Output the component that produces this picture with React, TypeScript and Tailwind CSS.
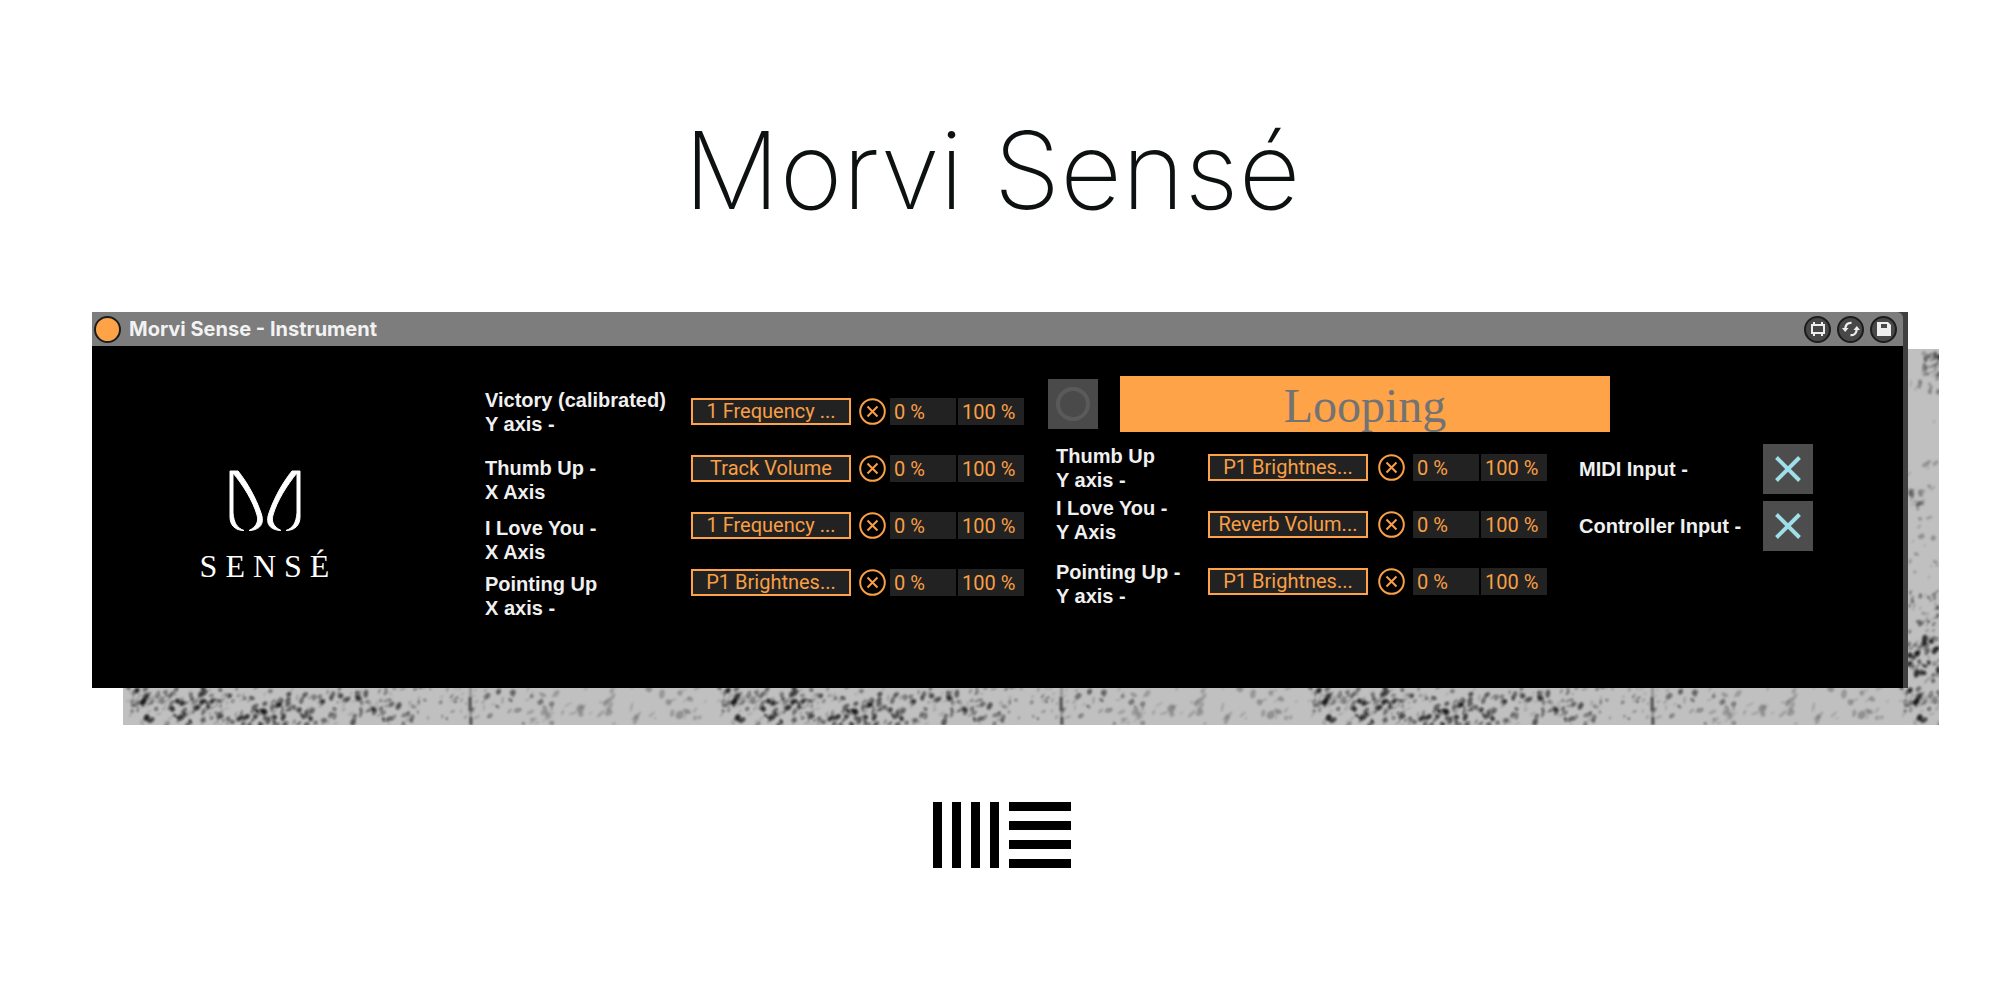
import { useId } from "react";

const TILE = 591;
const STRIP_H = 376;

type Speck = { x: number; y: number; rx: number; ry: number; o: number; a: number };

function makeSpecks(): Speck[] {
  let seed = 20;
  const rnd = () => {
    seed = (seed * 1664525 + 1013904223) % 4294967296;
    return seed / 4294967296;
  };
  const out: Speck[] = [];
  const add = (n: number, x0: number, x1: number, y0: number, y1: number, size: number, dark: number) => {
    for (let i = 0; i < n; i++) {
      const k = rnd();
      out.push({
        x: x0 + rnd() * (x1 - x0),
        y: y0 + rnd() * (y1 - y0),
        rx: 0.8 + k * k * size,
        ry: 1.2 + rnd() * size * 1.4,
        o: 0.15 + k * k * dark,
        a: rnd() * 70 + 5,
      });
    }
  };
  // lower edge of the concrete
  add(170, 4, 182, 338, 376, 2, 0.7);
  add(60, 60, 175, 350, 376, 2, 0.8);
  add(28, 4, 46, 338, 360, 2, 0.6);
  add(100, 180, 292, 338, 376, 2, 0.6);
  add(30, 292, 345, 338, 376, 1, 0.5);
  add(36, 349, 430, 338, 376, 2, 0.4);
  add(60, 400, 585, 338, 376, 3, 0.1);
  // right edge
  add(20, 27, 43, 0, 28, 2, 0.8);
  add(22, 12, 43, 0, 44, 2, 0.2);
  add(18, 14, 28, 140, 160, 2, 0.35);
  add(24, 12, 43, 60, 240, 2, 0.12);
  add(50, 12, 43, 240, 300, 1, 0.4);
  add(60, 12, 43, 288, 332, 2, 0.7);
  return out;
}

const SPECKS = makeSpecks();

function Concrete() {
  const id = useId();
  return (
    <svg aria-hidden="true" className="block h-full w-full">
      <defs>
        <filter id={`${id}-soft`} x="0" y="0" width="100%" height="100%">
          <feGaussianBlur stdDeviation="0.8" />
        </filter>
        <pattern id={id} width={TILE} height={STRIP_H} patternUnits="userSpaceOnUse">
          <rect width={TILE} height={STRIP_H} fill="#c0c0c0" />
          <g filter={`url(#${id}-soft)`}>
            {SPECKS.map((s, i) => (
              <ellipse
                key={i}
                cx={s.x}
                cy={s.y}
                rx={s.rx}
                ry={s.ry}
                fill="#111"
                opacity={s.o}
                transform={`rotate(${s.a} ${s.x} ${s.y})`}
              />
            ))}
            <rect x="346" width="3" height={STRIP_H} fill="#666" opacity="0.45" />
            <path d="M347 348v14M348 368v8" stroke="#222" strokeWidth="3" opacity="0.6" />
          </g>
        </pattern>
      </defs>
      <rect width="100%" height="100%" fill={`url(#${id})`} />
    </svg>
  );
}

function HeaderButton({ label, children }: { label: string; children: React.ReactNode }) {
  return (
    <button
      type="button"
      aria-label={label}
      className="flex size-[27px] items-center justify-center rounded-full border-2 border-[#1c1c1c] bg-[#484848]"
    >
      {children}
    </button>
  );
}

function SenseLogo() {
  return (
    <div className="flex w-full flex-col items-center text-white">
      <svg aria-hidden="true" width="72" height="62" viewBox="0 0 72 62" fill="currentColor" stroke="currentColor">
        <path d="M1 1H9C18 12 27 28 32 43C36 54 31 60 20 60.500C27 57 30 52 28 45C24 31 14 15 4 3V43C5 53 8 58 15 60.500C6 60.500 1 55 1 47Z" />
        <path d="M71 1H63C54 12 45 28 40 43C36 54 41 60 52 60.500C45 57 42 52 44 45C48 31 58 15 68 3V43C67 53 64 58 57 60.500C66 60.500 71 55 71 47Z" />
      </svg>
      <span className="mt-4 pl-2 font-['Liberation_Serif',serif] text-[32px] leading-9 tracking-[0.25em]">SENSÉ</span>
    </div>
  );
}

type Row = { id: string; label: [string, string]; target: string; labelGap: string };

const LEFT: Row[] = [
  { id: "victory-y", label: ["Victory (calibrated)", "Y axis -"], target: "1 Frequency ...", labelGap: "" },
  { id: "thumb-x", label: ["Thumb Up -", "X Axis"], target: "Track Volume", labelGap: "mt-5" },
  { id: "love-x", label: ["I Love You -", "X Axis"], target: "1 Frequency ...", labelGap: "mt-3" },
  { id: "pointing-x", label: ["Pointing Up", "X axis -"], target: "P1 Brightnes...", labelGap: "mt-2" },
];

const RIGHT: Row[] = [
  { id: "thumb-y", label: ["Thumb Up", "Y axis -"], target: "P1 Brightnes...", labelGap: "" },
  { id: "love-y", label: ["I Love You -", "Y Axis"], target: "Reverb Volum...", labelGap: "mt-1" },
  { id: "pointing-y", label: ["Pointing Up -", "Y axis -"], target: "P1 Brightnes...", labelGap: "mt-4" },
];

function Labels({ rows }: { rows: Row[] }) {
  return (
    <div className="flex flex-col font-['Liberation_Sans',sans-serif] text-xl leading-6 font-bold whitespace-nowrap text-[#f0f0f0]">
      {rows.map((r) => (
        <label key={r.id} htmlFor={r.id} className={r.labelGap}>
          {r.label[0]}
          <br />
          {r.label[1]}
        </label>
      ))}
    </div>
  );
}

function Controls({ rows, clearMargin }: { rows: Row[]; clearMargin: string }) {
  return (
    <div className="flex flex-col gap-[30px] font-[Roboto,sans-serif] text-xl text-[#f99f45]">
      {rows.map((r) => (
        <div key={r.id} className="flex h-[27px] items-center">
          <button
            id={r.id}
            type="button"
            className="h-full w-40 border-2 border-[#fea348] bg-[#222] text-center leading-[23px] whitespace-nowrap"
          >
            {r.target}
          </button>
          <button type="button" aria-label={`Clear ${r.label[0]}`} className={clearMargin}>
            <svg width="27" height="27" viewBox="0 0 27 27" fill="none" stroke="currentColor" strokeWidth="2">
              <circle cx="13.500" cy="13.500" r="12.300" />
              <path d="M8.500 8.500l10 10M18.500 8.500l-10 10" />
            </svg>
          </button>
          <input
            type="text"
            aria-label={`${r.label[0]} minimum`}
            defaultValue="0 %"
            className="h-full w-[66px] bg-[#222] pl-1"
          />
          <input
            type="text"
            aria-label={`${r.label[0]} maximum`}
            defaultValue="100 %"
            className="ml-[2px] h-full w-[66px] bg-[#222] pl-1"
          />
        </div>
      ))}
    </div>
  );
}

function InputToggle({ label }: { label: string }) {
  return (
    <div className="flex items-center justify-between gap-4">
      <span className="font-['Liberation_Sans',sans-serif] text-xl leading-6 font-bold whitespace-nowrap text-[#f0f0f0]">
        {label}
      </span>
      <button
        type="button"
        aria-label={label}
        className="flex size-[50px] items-center justify-center bg-[#4d4d4d]"
      >
        <svg width="26" height="26" viewBox="0 0 26 26" stroke="#9fdfea" strokeWidth="4" fill="none">
          <path d="M1.500 1.500l23 23M24.500 1.500l-23 23" />
        </svg>
      </button>
    </div>
  );
}

function Device() {
  return (
    <section className="relative flex border-r-[5px] border-[#404040] bg-[#404040]">
      <div className="flex-1">
        <header className="flex h-[34px] items-center rounded-tr-md bg-[#7d7d7d] pr-[6px] pl-[2px]">
          <button
            type="button"
            aria-label="Device on"
            className="size-[27px] rounded-full border-2 border-[#1c1c1c] bg-[#fea348]"
          />
          <h2 className="ml-2 flex-1 font-[Inter,sans-serif] text-xl font-bold text-[#f2f2f2]">
            Morvi Sense - Instrument
          </h2>
          <div className="flex gap-[6px]">
            <HeaderButton label="Edit patch">
              <svg width="16" height="16" viewBox="0 0 16 16" fill="none" stroke="#eee" strokeWidth="2">
                <path d="M2 4H14V12H2ZM4 1V4M12 1V4M4 12V15M12 12V15" />
                <path d="M1 4H15M1 12H15" />
              </svg>
            </HeaderButton>
            <HeaderButton label="Hot-swap">
              <svg width="18" height="16" viewBox="0 0 18 16" fill="none" stroke="#eee" strokeWidth="2.200">
                <path d="M9.500 1.800C5.500 1.500 3.500 4 3.200 8M8.500 14.200C12.500 14.500 14.500 12 14.800 8" />
                <path d="M0 7H6.500L3.200 11ZM18 9H11.500L14.800 5Z" fill="#eee" stroke="none" />
              </svg>
            </HeaderButton>
            <HeaderButton label="Save preset">
              <svg width="16" height="16" viewBox="0 0 16 16">
                <path d="M1 1H12L15 4V15H1Z" fill="#eee" />
                <path d="M5 3H11V7H5Z" fill="#484848" />
              </svg>
            </HeaderButton>
          </div>
        </header>

        <div className="flex items-start bg-black pt-[30px] pr-[90px] pb-[68px]">
          <div className="min-w-0 flex-1 pt-[94px]">
            <div className="pr-12">
              <SenseLogo />
            </div>
          </div>

          <div className="flex shrink-0 items-start pt-3">
            <div className="w-[206px]">
              <Labels rows={LEFT} />
            </div>
            <div className="pt-[10px]">
              <Controls rows={LEFT} clearMargin="ml-2 mr-1" />
            </div>
          </div>

          <div className="ml-6 shrink-0">
            <div className="flex items-center gap-[22px]">
              <button
                type="button"
                aria-label="Loop record"
                className="flex size-[50px] items-center justify-center bg-[#4a4a4a]"
              >
                <span className="size-[34px] rounded-full border-4 border-[#5a5a5a]" />
              </button>
              <button
                type="button"
                className="h-[56px] w-[490px] bg-[#fea348] pt-1 font-['Liberation_Serif',serif] text-5xl leading-[52px] text-[#737373]"
              >
                Looping
              </button>
            </div>
            <div className="flex items-start pt-3 pl-2">
              <div className="w-[152px]">
                <Labels rows={RIGHT} />
              </div>
              <div className="pt-[10px]">
                <Controls rows={RIGHT} clearMargin="ml-[10px] mr-2" />
              </div>
              <div className="ml-8 flex w-[234px] flex-col gap-[7px]">
                <InputToggle label="MIDI Input -" />
                <InputToggle label="Controller Input -" />
              </div>
            </div>
            <div className="h-[5px]" />
          </div>
        </div>
      </div>
    </section>
  );
}

function LiveMark() {
  return (
    <svg role="img" aria-label="Ableton Live" width="140" height="68" viewBox="0 0 140 68" className="mx-auto block">
      <path d="M1 1H10V67H1ZM20 1H29V67H20ZM39 1H48V67H39ZM58 1H67V67H58Z" />
      <path d="M77 1H139V10H77ZM77 20H139V29H77ZM77 39H139V48H77ZM77 58H139V67H77Z" />
    </svg>
  );
}

export default function App() {
  return (
    <main className="min-h-screen bg-white pt-[108px]">
      <h1 className="pr-4 text-center font-[Inter,sans-serif] text-[107px] leading-[124px] font-[250] whitespace-nowrap text-[#0d1112]">
        Morvi Sensé
      </h1>
      <div className="relative mx-[92px] mt-20">
        <div className="absolute top-[37px] -right-[31px] -bottom-[37px] left-[31px]">
          <Concrete />
        </div>
        <Device />
      </div>
      <div className="pt-[113px] pl-1">
        <LiveMark />
      </div>
    </main>
  );
}
